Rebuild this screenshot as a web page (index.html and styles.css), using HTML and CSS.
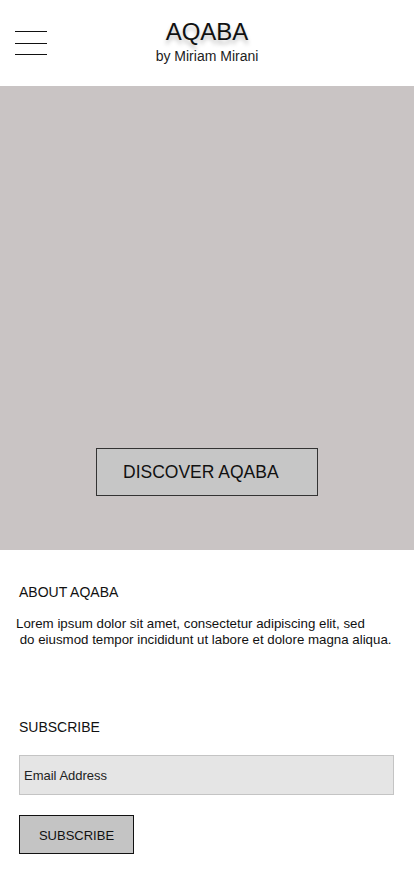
FILE: index.html
```html
<!DOCTYPE html>
<html lang="en">
<head>
<meta charset="utf-8">
<meta name="viewport" content="width=device-width, initial-scale=1">
<title>AQABA</title>
<link rel="stylesheet" href="styles.css">
</head>
<body>
<header class="header">
  <button class="menu" aria-label="Menu">
    <span class="bar"></span><span class="bar"></span><span class="bar"></span>
  </button>
  <div class="brand">
    <div class="title">AQABA</div>
    <div class="byline">by Miriam Mirani</div>
  </div>
</header>
<section class="hero">
  <a class="discover" href="#">DISCOVER AQABA</a>
</section>
<section class="about">
  <h2 class="heading">ABOUT AQABA</h2>
  <p class="text">Lorem ipsum dolor sit amet, consectetur adipiscing elit, sed<br>&nbsp;do eiusmod tempor incididunt ut labore et dolore magna aliqua.</p>
</section>
<section class="subscribe">
  <h2 class="heading">SUBSCRIBE</h2>
  <div class="email">Email Address</div>
  <button class="sub-btn">SUBSCRIBE</button>
</section>
</body>
</html>
```
FILE: styles.css
```css
* { box-sizing: border-box; }
html, body { margin: 0; padding: 0; background: #fff; }
body { font-family: "Liberation Sans", Arial, sans-serif; color: #111; width: 414px; }

.header {
  height: 86px;
  position: relative;
  display: flex;
  justify-content: center;
  align-items: flex-start;
}
.menu {
  position: absolute;
  left: 15px;
  top: 31px;
  width: 32px;
  padding: 0;
  border: 0;
  background: none;
  display: flex;
  flex-direction: column;
  gap: 10.5px;
}
.bar { display: block; height: 1px; background: #111; width: 32px; }
.brand { text-align: center; padding-top: 18px; }
.title {
  font-size: 24px;
  line-height: 28px;
  color: #111;
  text-shadow: 0 4px 4px rgba(0,0,0,0.25);
}
.byline { font-size: 14px; line-height: 16px; margin-top: 2px; color: #222; }

.hero {
  height: 464px;
  background: #c9c4c4;
  display: flex;
  justify-content: center;
  align-items: flex-end;
  padding-bottom: 54px;
}
.discover {
  width: 222px;
  height: 48px;
  background: #c6c6c6;
  border: 1px solid #333;
  color: #111;
  text-decoration: none;
  font-size: 17.5px;
  display: flex;
  align-items: center;
  padding-left: 26px;
}

.about { padding-top: 33px; height: 154px; }
.heading {
  margin: 0 0 0 19px;
  font-size: 14px;
  font-weight: normal;
  line-height: 18px;
  color: #111;
}
.text {
  margin: 15px 0 0 16px;
  font-size: 13.3px;
  line-height: 16px;
  color: #111;
}
.subscribe { padding-top: 14px; }
.email {
  margin: 19px 0 0 19px;
  width: 375px;
  height: 40px;
  background: #e5e5e5;
  border: 1px solid #c4c4c4;
  font-size: 13px;
  display: flex;
  align-items: center;
  padding-left: 4px;
  color: #222;
}
.sub-btn {
  display: block;
  margin: 20px 0 0 19px;
  width: 115px;
  height: 39px;
  background: #c4c4c4;
  border: 1px solid #111;
  font-family: "Liberation Sans", Arial, sans-serif;
  font-size: 13px;
  color: #111;
  padding: 2px 0 0 0;
}
```
